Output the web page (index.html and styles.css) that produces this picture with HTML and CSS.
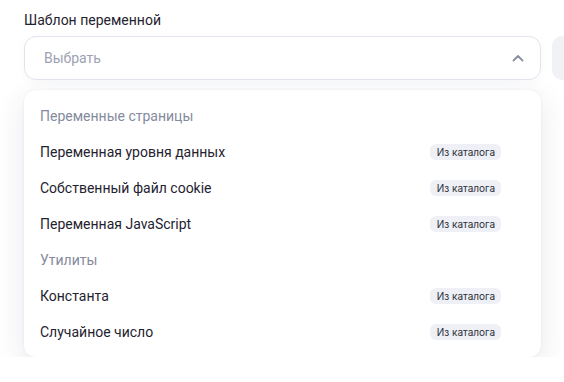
FILE: index.html
```html
<!DOCTYPE html>
<html lang="ru">
<head>
  <meta charset="UTF-8" />
  <title>Шаблон переменной</title>
  <link rel="stylesheet" href="styles.css">
</head>
<body>
  <div class="field">
    <label class="field-label">Шаблон переменной</label>
    <div class="field-row">
      <div class="select">
        <span class="placeholder">Выбрать</span>
        <svg class="chevron" width="14" height="14" viewBox="0 0 14 14">
          <path d="M2.5 9.5 L7 5 L11.5 9.5" fill="none" stroke="#8a90a0" stroke-width="1.8" stroke-linecap="round" stroke-linejoin="round"/>
        </svg>
      </div>
      <div class="side-btn"></div>
    </div>

    <div class="menu">
      <div class="group">Переменные страницы</div>
      <div class="item"><span>Переменная уровня данных</span><span class="badge">Из каталога</span></div>
      <div class="item"><span>Собственный файл cookie</span><span class="badge">Из каталога</span></div>
      <div class="item"><span>Переменная JavaScript</span><span class="badge">Из каталога</span></div>
      <div class="group">Утилиты</div>
      <div class="item"><span>Константа</span><span class="badge">Из каталога</span></div>
      <div class="item"><span>Случайное число</span><span class="badge">Из каталога</span></div>
    </div>
  </div>
</body>
</html>
```

FILE: styles.css
```css
body {
  margin: 0;
  background: #fff;
  font-family: Roboto, Inter, sans-serif;
  color: #1f2330;
  overflow: hidden;
}

.field {
  padding: 11px 0 0 24px;
}

.field-label {
  display: block;
  font-size: 14px;
  line-height: 18px;
  margin-bottom: 7px;
}

.field-row {
  display: flex;
  gap: 11px;
}

.select {
  flex: none;
  width: 517px;
  height: 44px;
  box-sizing: border-box;
  border: 1px solid #e1e4ec;
  border-radius: 12px;
  display: flex;
  align-items: center;
  justify-content: space-between;
  padding: 0 15px 0 19px;
  box-shadow: 0 2px 10px rgba(40, 50, 90, 0.03);
}

.placeholder {
  font-size: 14px;
  color: #9ca2b2;
}

.side-btn {
  flex: none;
  width: 40px;
  height: 44px;
  border-radius: 10px;
  background: #f0f2f6;
}

.menu {
  width: 517px;
  box-sizing: border-box;
  margin-top: 10px;
  padding: 8px 40px 7px 16px;
  background: #fff;
  border-radius: 12px;
  box-shadow: 0 8px 30px rgba(40, 50, 90, 0.11), 0 0 3px rgba(40, 50, 90, 0.07);
}

.group, .item {
  height: 36px;
  display: flex;
  align-items: center;
  justify-content: space-between;
  font-size: 14px;
}

.group {
  color: #858b9c;
}

.badge {
  font-family: Inter, Roboto, sans-serif;
  font-size: 10px;
  line-height: 16px;
  padding: 0 6px 0 7px;
  border-radius: 6px;
  background: #eef0f5;
  color: #2a2e3a;
}
```
